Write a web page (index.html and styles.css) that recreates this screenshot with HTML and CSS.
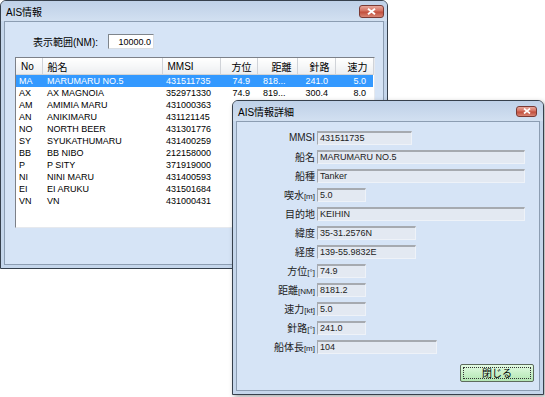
FILE: index.html
```html
<!DOCTYPE html>
<html lang="ja">
<head>
    <meta charset="UTF-8">
    <title>AIS情報</title>
    <link rel="stylesheet" href="styles.css">
</head>
<body>
    <div class="desktop">
        <section class="window main-window">
            <header class="titlebar">
                <span class="title">AIS情報</span>
                <span class="close-btn">
                    <svg width="9" height="7" viewBox="0 0 9 7"><path d="M1 0.8 L8 6.2 M8 0.8 L1 6.2" stroke="#fff" stroke-width="2"/></svg>
                </span>
            </header>
            <div class="client main-client">
                <div class="range-row">
                    <label for="range">表示範囲(NM):</label>
                    <input type="text" id="range" class="range-input" value="10000.0">
                </div>
                <div class="ship-list">
                    <table>
                        <colgroup>
                            <col class="c-no"><col class="c-name"><col class="c-mmsi">
                            <col class="c-num1"><col class="c-num2"><col class="c-num3"><col class="c-num4">
                        </colgroup>
                        <thead>
                            <tr>
                                <th>No</th><th>船名</th><th>MMSI</th>
                                <th class="num">方位</th><th class="num">距離</th><th class="num">針路</th><th class="num">速力</th>
                            </tr>
                        </thead>
                        <tbody>
                            <tr class="selected"><td>MA</td><td>MARUMARU NO.5</td><td>431511735</td><td class="num">74.9</td><td>818...</td><td class="num">241.0</td><td class="num">5.0</td></tr>
                            <tr><td>AX</td><td>AX MAGNOIA</td><td>352971330</td><td class="num">74.9</td><td>819...</td><td class="num">300.4</td><td class="num">8.0</td></tr>
                            <tr><td>AM</td><td>AMIMIA MARU</td><td>431000363</td><td></td><td></td><td></td><td></td></tr>
                            <tr><td>AN</td><td>ANIKIMARU</td><td>431121145</td><td></td><td></td><td></td><td></td></tr>
                            <tr><td>NO</td><td>NORTH BEER</td><td>431301776</td><td></td><td></td><td></td><td></td></tr>
                            <tr><td>SY</td><td>SYUKATHUMARU</td><td>431400259</td><td></td><td></td><td></td><td></td></tr>
                            <tr><td>BB</td><td>BB NIBO</td><td>212158000</td><td></td><td></td><td></td><td></td></tr>
                            <tr><td>P</td><td>P SITY</td><td>371919000</td><td></td><td></td><td></td><td></td></tr>
                            <tr><td>NI</td><td>NINI MARU</td><td>431400593</td><td></td><td></td><td></td><td></td></tr>
                            <tr><td>EI</td><td>EI ARUKU</td><td>431501684</td><td></td><td></td><td></td><td></td></tr>
                            <tr><td>VN</td><td>VN</td><td>431000431</td><td></td><td></td><td></td><td></td></tr>
                        </tbody>
                    </table>
                </div>
            </div>
        </section>

        <section class="window detail-window">
            <header class="titlebar">
                <span class="title">AIS情報詳細</span>
                <span class="close-btn small">
                    <svg width="8" height="6" viewBox="0 0 8 6"><path d="M1 0.6 L7 5.4 M7 0.6 L1 5.4" stroke="#fff" stroke-width="1.8"/></svg>
                </span>
            </header>
            <div class="client detail-client">
                <div class="detail-form">
                    <span class="field-label latin">MMSI</span><span class="field w-mmsi">431511735</span>
                    <span class="field-label">船名</span><span class="field w-wide">MARUMARU NO.5</span>
                    <span class="field-label">船種</span><span class="field w-wide">Tanker</span>
                    <span class="field-label">喫水<small>[m]</small></span><span class="field w-short">5.0</span>
                    <span class="field-label">目的地</span><span class="field w-wide">KEIHIN</span>
                    <span class="field-label">緯度</span><span class="field w-pos">35-31.2576N</span>
                    <span class="field-label">経度</span><span class="field w-pos">139-55.9832E</span>
                    <span class="field-label">方位<small>[°]</small></span><span class="field w-short">74.9</span>
                    <span class="field-label">距離<small>[NM]</small></span><span class="field w-short">8181.2</span>
                    <span class="field-label">速力<small>[kt]</small></span><span class="field w-short">5.0</span>
                    <span class="field-label">針路<small>[°]</small></span><span class="field w-short">241.0</span>
                    <span class="field-label">船体長<small>[m]</small></span><span class="field w-len">104</span>
                </div>
                <div class="button-row">
                    <button type="button" class="btn-close"><span>閉じる</span></button>
                </div>
            </div>
        </section>
    </div>
</body>
</html>
```

FILE: styles.css
```css
body {
    margin: 0;
    background-color: #fff;
    font-family: "Liberation Sans", "Noto Sans CJK JP", sans-serif;
    color: #000;
}

.desktop {
    position: relative;
    width: 545px;
    height: 397px;
    overflow: hidden;
}

/* Window frame */
.window {
    position: absolute;
    display: flex;
    flex-direction: column;
    box-sizing: border-box;
    padding: 0 3px 3px;
    background-color: #c5d6eb;
    border: 1px solid #36404c;
    border-radius: 6px 6px 0 0;
}

.main-window {
    left: 0;
    top: 0;
    width: 388px;
    height: 269px;
}

.detail-window {
    left: 232px;
    top: 100px;
    width: 312px;
    height: 295px;
    box-shadow: 2px 2px 5px rgba(0, 0, 0, 0.35);
}

.titlebar {
    height: 20px;
    display: flex;
    align-items: center;
    justify-content: space-between;
    margin: 0 -3px;
    padding: 0 3px 0 5px;
    border-radius: 5px 5px 0 0;
    background: linear-gradient(#bfd1e8, #c8d8ec 50%, #d2e0f1);
}

.title {
    font-size: 10px;
    font-family: "Liberation Sans", "Noto Sans CJK JP", sans-serif;
    color: #000;
    padding-top: 1px;
}

.close-btn {
    width: 25px;
    height: 13px;
    margin-top: 1px;
    display: flex;
    align-items: center;
    justify-content: center;
    box-sizing: border-box;
    border: 1px solid #7a3a34;
    border-radius: 3px;
    background: linear-gradient(#e8a89c, #d4705f 45%, #c14e3c 55%, #d88574);
}

.close-btn.small {
    width: 21px;
    height: 11px;
    margin-top: 0;
    margin-right: 3px;
}

.client {
    flex: 1;
    background-color: #d6e4f6;
    border: 1px solid #8c9db2;
}

/* Main window */
.main-client {
    padding: 12px 0 0 10px;
}

.range-row {
    display: flex;
    align-items: center;
    gap: 10px;
    padding-left: 18px;
    height: 15px;
}

.range-row label {
    font-size: 10px;
}

.range-input {
    width: 46px;
    height: 15px;
    box-sizing: border-box;
    padding: 0 2px;
    border: 1px solid #8e9399;
    border-color: #7f858c #d8dde3 #d8dde3 #7f858c;
    text-align: right;
    font-family: "Liberation Sans", sans-serif;
    font-size: 9px;
    background-color: #fff;
}

.ship-list {
    margin-top: 8px;
    width: 360px;
    height: 171px;
    box-sizing: border-box;
    background-color: #fff;
    border: 1px solid;
    border-color: #7c8088 #e6e9ee #e6e9ee #7c8088;
    overflow: hidden;
}

.ship-list table {
    border-collapse: collapse;
    table-layout: fixed;
    width: 357px;
}

.c-no { width: 26px; }
.c-name { width: 120px; }
.c-mmsi { width: 58px; }
.c-num1 { width: 37px; }
.c-num2 { width: 40px; }
.c-num3 { width: 38px; }
.c-num4 { width: 38px; }

.ship-list th {
    height: 16px;
    padding: 0 5px;
    font-weight: normal;
    font-size: 10px;
    text-align: left;
    background: linear-gradient(#ffffff, #f6f7f8 50%, #eceef1);
    border-right: 1px solid #d0d3d8;
    border-bottom: 1px solid #d5d5d5;
}

.ship-list th.num {
    text-align: right;
    padding-right: 5px;
}

.ship-list td {
    height: 12px;
    padding: 0 4px;
    font-size: 9px;
    line-height: 12px;
    white-space: nowrap;
    overflow: hidden;
}

.ship-list td:first-child {
    padding-left: 3px;
}

.ship-list td:nth-child(2) {
    padding-left: 5px;
}

.ship-list td.num {
    text-align: right;
    padding-right: 7px;
}

.ship-list td:nth-child(5) {
    padding-left: 6px;
}

.ship-list tr.selected td {
    background-color: #3399ff;
    color: #fff;
}

/* Detail window */
.detail-client {
    display: flex;
    flex-direction: column;
    padding: 9px 5px 0 0;
}

.detail-form {
    display: grid;
    grid-template-columns: 78px auto;
    grid-auto-rows: 14px;
    column-gap: 2px;
    row-gap: 5px;
    justify-items: start;
    align-items: center;
}

.field-label {
    justify-self: end;
    font-family: "Noto Sans CJK JP", sans-serif;
    font-size: 10px;
    line-height: 14px;
    height: 14px;
    color: #222;
}

.field-label.latin {
    font-family: "Liberation Sans", sans-serif;
    font-size: 10px;
}

.field-label small {
    font-family: "Liberation Sans", sans-serif;
    font-size: 8px;
}

.field {
    height: 14px;
    box-sizing: border-box;
    padding: 0 2px;
    font-size: 9px;
    line-height: 11px;
    color: #222;
    background-color: #e3e9f2;
    border: 1px solid;
    border-color: #a6aab0 #eef2f8 #eef2f8 #a6aab0;
    border-top-width: 2px;
    white-space: nowrap;
}

.w-mmsi { width: 95px; }
.w-wide { width: 208px; }
.w-short { width: 49px; }
.w-pos { width: 99px; }
.w-len { width: 120px; }

.button-row {
    display: flex;
    justify-content: flex-end;
    margin-top: 10px;
}

.btn-close {
    width: 74px;
    height: 18px;
    padding: 2px;
    border: 1px solid #5d6b5d;
    border-radius: 2px;
    background: linear-gradient(#e3fbe3, #c9f0c9 50%, #b3e6b3);
    font-family: "Noto Sans CJK JP", sans-serif;
    font-size: 10px;
    cursor: pointer;
}

.btn-close span {
    display: flex;
    align-items: center;
    justify-content: center;
    height: 100%;
    border: 1px dotted #333;
    box-sizing: border-box;
    line-height: 1;
}
```
